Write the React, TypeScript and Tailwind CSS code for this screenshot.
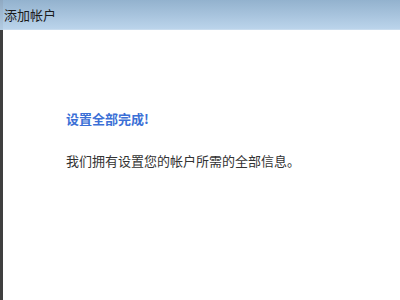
import React from "react";

const App: React.FC = () => {
  return (
    <div
      className="flex w-[400px] h-[300px] overflow-hidden bg-white"
      style={{ fontFamily: '"Noto Sans CJK SC", "Microsoft YaHei", sans-serif' }}
    >
      <div className="w-[3px] h-full flex flex-col shrink-0">
        <div className="h-[30px] bg-gradient-to-b from-[#8fa9c2] to-[#b4cce2]" />
        <div className="flex-1 bg-[#3f3f3f]" />
      </div>
      <div className="flex flex-col flex-1">
        <div className="h-[30px] flex items-center pl-[1px] bg-gradient-to-b from-[#93b2ce] to-[#bbd4eb] border-b border-[#c9dcee]">
          <span className="text-[13px] leading-none text-[#1b1b1b]">添加帐户</span>
        </div>
        <div className="flex flex-col pl-[63px] pt-[80px]">
          <p className="text-[13px] leading-[18px] font-bold text-[#3b6fd6]">设置全部完成!</p>
          <p className="mt-[24px] text-[13px] leading-[18px] text-[#333333]">
            我们拥有设置您的帐户所需的全部信息。
          </p>
        </div>
      </div>
    </div>
  );
};

export default App;
